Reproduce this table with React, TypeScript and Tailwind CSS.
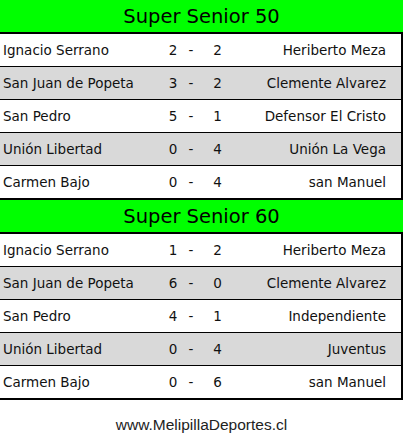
import React from "react";

type Match = [string, number, number, string];

const sections: { title: string; matches: Match[] }[] = [
  {
    title: "Super Senior 50",
    matches: [
      ["Ignacio Serrano", 2, 2, "Heriberto Meza"],
      ["San Juan de Popeta", 3, 2, "Clemente Alvarez"],
      ["San Pedro", 5, 1, "Defensor El Cristo"],
      ["Unión Libertad", 0, 4, "Unión La Vega"],
      ["Carmen Bajo", 0, 4, "san Manuel"],
    ],
  },
  {
    title: "Super Senior 60",
    matches: [
      ["Ignacio Serrano", 1, 2, "Heriberto Meza"],
      ["San Juan de Popeta", 6, 0, "Clemente Alvarez"],
      ["San Pedro", 4, 1, "Independiente"],
      ["Unión Libertad", 0, 4, "Juventus"],
      ["Carmen Bajo", 0, 6, "san Manuel"],
    ],
  },
];

function Section({ title, matches }: { title: string; matches: Match[] }) {
  return (
    <div className="flex flex-col">
      <div className="h-[34px] bg-[#00ff00] border-b-2 border-black flex items-center justify-center text-[19.5px] text-black leading-none pt-[2px]">
        {title}
      </div>
      <div className="border-r-2 border-black">
        {matches.map((m, i) => (
          <div
            key={i}
            className={
              "grid grid-cols-[160px_26px_10px_43px_1fr] items-center text-[13.5px] text-[#111] border-black " +
              (i === matches.length - 1 ? "h-[34px] border-b-2" : "h-[33px] border-b") +
              (i % 2 === 1 ? " bg-[#d9d9d9]" : " bg-white")
            }
          >
            <div className="pl-[3px] whitespace-nowrap">{m[0]}</div>
            <div className="text-center">{m[1]}</div>
            <div className="text-center">-</div>
            <div className="text-center">{m[2]}</div>
            <div className="text-right pr-[15px] whitespace-nowrap">{m[3]}</div>
          </div>
        ))}
      </div>
    </div>
  );
}

export default function App() {
  return (
    <div
      className="w-[403px] h-[446px] bg-white overflow-hidden flex flex-col"
      style={{ fontFamily: '"DejaVu Sans", Verdana, sans-serif' }}
    >
      {sections.map((s) => (
        <Section key={s.title} title={s.title} matches={s.matches} />
      ))}
      <div
        className="flex-1 flex items-center justify-center text-[15.5px] text-[#222] pt-[4px]"
        style={{ fontFamily: '"Liberation Sans", Arial, sans-serif' }}
      >
        www.MelipillaDeportes.cl
      </div>
    </div>
  );
}
